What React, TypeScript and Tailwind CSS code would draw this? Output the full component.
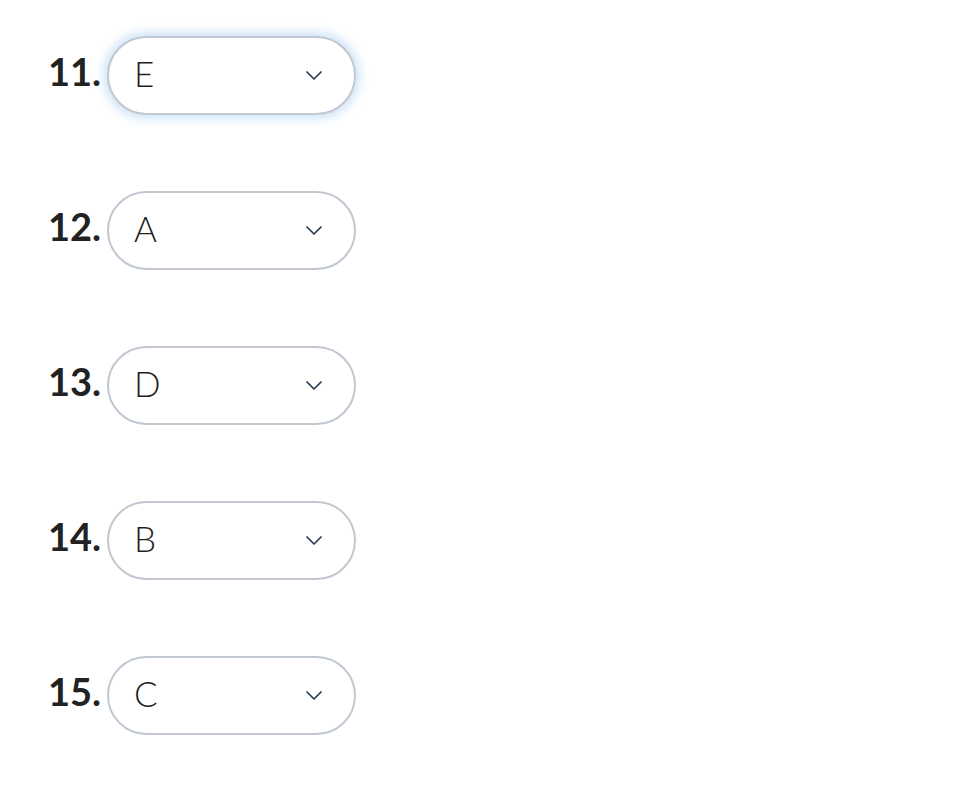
import React from "react";

const rows = [
  { n: "11.", v: "E", focus: true },
  { n: "12.", v: "A" },
  { n: "13.", v: "D" },
  { n: "14.", v: "B" },
  { n: "15.", v: "C" },
];

function Chevron() {
  return (
    <svg width="16" height="9" viewBox="0 0 16 9" fill="none">
      <path d="M1 1l7 7 7-7" stroke="#2a3c54" strokeWidth="1.7" strokeLinecap="round" strokeLinejoin="round" />
    </svg>
  );
}

export default function App() {
  return (
    <div className="min-h-[788px] bg-white pl-[48px] pt-[36px] flex flex-col gap-[76px]" style={{ fontFamily: "Lato, 'Noto Sans', sans-serif" }}>
      {rows.map((r) => (
        <div key={r.n} className="flex items-center">
          <span className="text-[38px] font-bold text-[#222222] leading-none mb-[10px] w-[59px]">{r.n}</span>
          <div
            className={
              "w-[249px] h-[79px] rounded-full border-2 border-[#c1c8d2] bg-white flex items-center justify-between pl-[25px] pr-[32px] " +
              (r.focus ? "shadow-[0_0_10px_4px_rgba(150,195,240,0.45)]" : "")
            }
          >
            <span className="text-[35px] font-light text-[#1f1f1f] leading-none mb-[4px]">{r.v}</span>
            <Chevron />
          </div>
        </div>
      ))}
    </div>
  );
}
